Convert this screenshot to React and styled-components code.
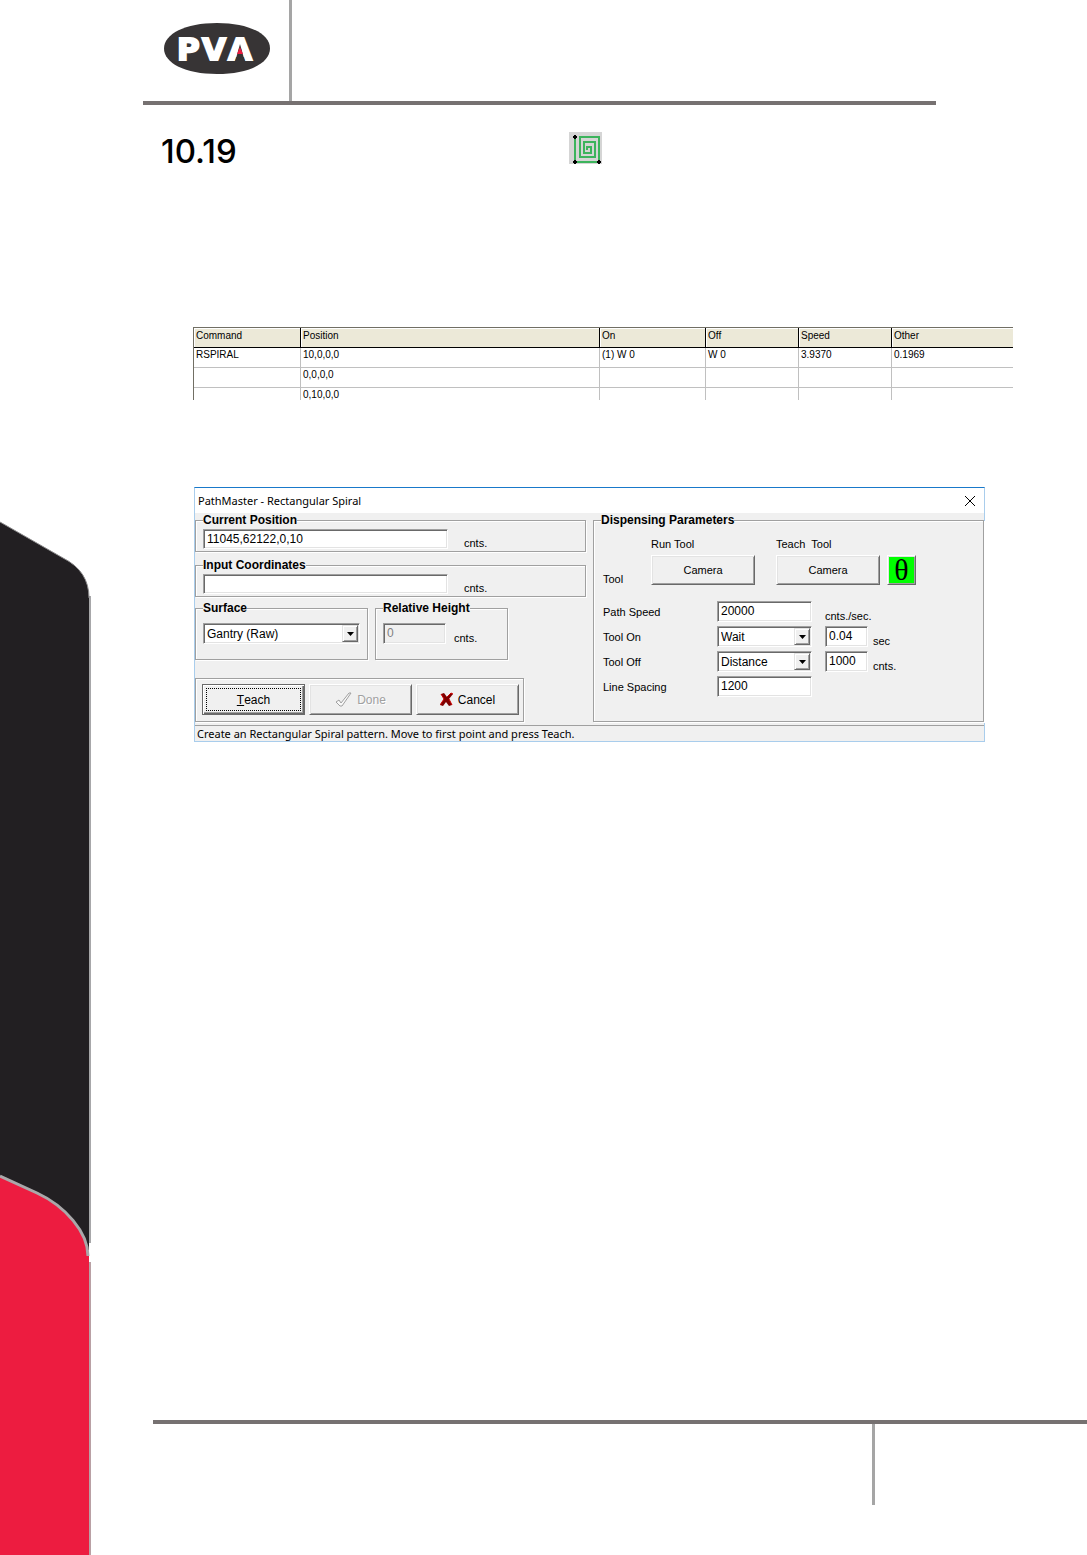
import React from 'react';
import styled, { createGlobalStyle, css } from 'styled-components';

const GlobalStyle = createGlobalStyle`
  * {
    box-sizing: border-box;
  }
  body {
    margin: 0;
    background: #fff;
    color: #000;
    font-family: "Liberation Sans", Arial, sans-serif;
  }
`;

const Page = styled.div`
  display: grid;
  grid-template-columns: 91px 1fr;
  min-height: 100vh;
`;
const Side = styled.aside`
  display: flex;
  align-items: flex-end;
  overflow: hidden;
`;
const Main = styled.main`
  display: flex;
  flex-direction: column;
  min-width: 0;
`;

const Header = styled.header`
  display: flex;
  height: 105px;
  margin: 0 151px 0 52px;
  border-bottom: 4px solid #767171;
`;
const LogoCell = styled.div`
  width: 149px;
  padding: 23px 0 0 21px;
  border-right: 3px solid #a5a5a5;
`;
const TitleRow = styled.div`
  display: flex;
  align-items: center;
  height: 32px;
  margin: 27px 0 0 70px;
`;
const SectionNumber = styled.h1`
  width: 408px;
  margin: 0;
  padding-top: 6px;
  font: 500 33px/32px Inter, sans-serif;
`;

const CommandTable = styled.table`
  table-layout: fixed;
  width: calc(100% - 176px);
  margin: 163px 74px 0 102px;
  border-collapse: separate;
  border-spacing: 0;
  border-top: 1px solid #716f64;
  border-left: 1px solid #716f64;
  font-size: 10px;
  line-height: 11px;
  text-align: left;
`;
const Col = styled.col`
  width: ${(p) => p.$width};
`;
const HeadCell = styled.th`
  height: 20px;
  padding: 2px 2px 0;
  vertical-align: top;
  font-weight: 400;
  background: #ece9d8;
  border-right: 1px solid #000;
  border-bottom: 1px solid #000;
  box-shadow: inset 1px 1px 0 #fff;
  &:last-child {
    border-right: 0;
  }
`;
const Cell = styled.td`
  height: 20px;
  padding: 1px 2px 0;
  vertical-align: top;
  border-right: 1px solid #c0c0c0;
  border-bottom: 1px solid #c0c0c0;
  &:last-child {
    border-right: 0;
  }
  tr:last-child > & {
    height: 12px;
    border-bottom: 0;
  }
`;

const sunken = css`
  border: 1px solid;
  border-color: #a0a0a0 #fff #fff #a0a0a0;
  box-shadow: inset 1px 1px 0 #696969, inset -1px -1px 0 #e3e3e3;
`;
const etched = css`
  border: 1px solid #a0a0a0;
  box-shadow: 1px 1px 0 #fff, inset 1px 1px 0 #fff;
`;

const Dialog = styled.section`
  margin: 87px 102px 0 103px;
  background: #f0f0f0;
  border: 1px solid #a9cdec;
  border-top-color: #1979ca;
`;
const TitleBar = styled.div`
  display: flex;
  align-items: center;
  justify-content: space-between;
  height: 25px;
  padding: 0 8px 0 3px;
  background: #fff;
`;
const DialogTitle = styled.h2`
  margin: 0;
  font: 400 11px/16px "Noto Sans", sans-serif;
`;
const CloseButton = styled.button`
  display: flex;
  padding: 0;
  border: 0;
  background: none;
`;
const DialogBody = styled.div`
  display: grid;
  grid-template-columns: 1fr 1fr;
  column-gap: 7px;
`;
const LeftColumn = styled.div`
  display: flex;
  flex-direction: column;
`;
const Group = styled.fieldset`
  ${etched}
  min-width: 0;
  width: ${(p) => p.$width || 'auto'};
  margin: ${(p) => p.$margin || 0};
  padding: ${(p) => p.$padding || '2px 7px'};
`;
const GroupTitle = styled.legend`
  padding: 0;
  background: #f0f0f0;
  font-size: 12px;
  font-weight: 700;
  line-height: 14px;
`;
const FieldRow = styled.div`
  display: flex;
  align-items: flex-end;
  gap: ${(p) => p.$gap || '16px'};
`;
const GroupRow = styled.div`
  display: flex;
  gap: 7px;
  margin-top: 4px;
`;
const TextInput = styled.input`
  ${sunken}
  width: ${(p) => p.$width || '100%'};
  height: ${(p) => p.$height || '21px'};
  padding: 0 3px 1px;
  border-radius: 0;
  background: #fff;
  color: #000;
  font: 12px/16px "Liberation Sans", Arial, sans-serif;
  &:disabled {
    background: #f0f0f0;
    color: #808080;
  }
`;
const Unit = styled.span`
  font-size: 11px;
  line-height: 12px;
`;

const ComboBox = styled.div`
  ${sunken}
  position: relative;
  width: ${(p) => p.$width || '100%'};
  height: 21px;
  background: #fff;
`;
const ComboSelect = styled.select`
  appearance: none;
  display: block;
  width: 100%;
  height: 100%;
  padding: 0 18px 0 3px;
  border: 0;
  background: transparent;
  color: #000;
  font: 12px/16px "Liberation Sans", Arial, sans-serif;
`;
const ComboArrow = styled.span`
  position: absolute;
  top: 1px;
  right: 1px;
  bottom: 1px;
  display: flex;
  align-items: center;
  justify-content: center;
  width: 16px;
  background: #f0f0f0;
  border: 1px solid;
  border-color: #e3e3e3 #696969 #696969 #e3e3e3;
  box-shadow: inset 1px 1px 0 #fff, inset -1px -1px 0 #a0a0a0;
  pointer-events: none;
`;

const PushButton = styled.button`
  display: flex;
  align-items: center;
  justify-content: center;
  gap: 5px;
  width: ${(p) => p.$width || '100%'};
  height: ${(p) => p.$height || '31px'};
  padding: 0;
  border: 1px solid;
  border-color: #fff #696969 #696969 #fff;
  border-radius: 0;
  background: #f0f0f0;
  box-shadow: inset 1px 1px 0 #e3e3e3, inset -1px -1px 0 #a0a0a0;
  color: #000;
  font: ${(p) => p.$size || '12px'}/14px "Liberation Sans", Arial, sans-serif;
  &:disabled {
    color: #a0a0a0;
    text-shadow: 1px 1px 0 #fff;
  }
`;
const DefaultButton = styled(PushButton)`
  padding: 3px;
  border-color: #696969;
  box-shadow: inset 1px 1px 0 #fff, inset -1px -1px 0 #696969, inset -2px -2px 0 #a0a0a0;
`;
const FocusRing = styled.span`
  display: flex;
  align-items: center;
  justify-content: center;
  width: 100%;
  height: 100%;
  border: 1px dotted #000;
`;
const ButtonPanel = styled.div`
  ${etched}
  display: flex;
  gap: 4px;
  width: 329px;
  margin-top: 18px;
  padding: 5px 0 6px 6px;
`;

const ToolGrid = styled.div`
  display: grid;
  grid-template-columns: 48px 104px 21px 104px 7px 29px;
  align-items: end;
  margin-left: 2px;
`;
const ToolHeading = styled.label`
  grid-row: 1;
  grid-column: ${(p) => p.$column};
  padding-bottom: 4px;
  font-size: 11px;
  line-height: 14px;
  white-space: pre;
`;
const ToolSlot = styled.div`
  grid-row: 2;
  grid-column: ${(p) => p.$column};
`;
const ToolLabel = styled.span`
  grid-row: 2;
  grid-column: 1;
  font-size: 11px;
  line-height: 12px;
`;
const Theta = styled.span`
  display: flex;
  align-items: center;
  justify-content: center;
  width: 25px;
  height: 26px;
  background: #0f0;
  font: 30px/26px "Liberation Serif", serif;
`;
const ParameterGrid = styled.div`
  display: grid;
  grid-template-columns: 114px 95px 1fr;
  row-gap: 4px;
  align-items: center;
  margin: 16px 0 0 2px;
`;
const ParameterLabel = styled.label`
  font-size: 11px;
  line-height: 14px;
`;
const ParameterExtra = styled.div`
  display: flex;
  align-items: flex-end;
  gap: 5px;
  height: 21px;
  padding-left: 13px;
`;
const StatusBar = styled.div`
  margin-top: 3px;
  padding-left: 2px;
  border-top: 1px solid #a0a0a0;
  font: 11px/15px "Noto Sans", sans-serif;
`;

const Footer = styled.footer`
  display: grid;
  grid-template-columns: 1fr 215px;
  margin: auto 0 50px 62px;
  border-top: 4px solid #767171;
`;
const FooterCell = styled.div`
  grid-column: 2;
  height: 81px;
  border-left: 3px solid #a5a5a5;
`;

const columns = [
  ['Command', '107px'],
  ['Position', '299px'],
  ['On', '106px'],
  ['Off', '93px'],
  ['Speed', '93px'],
  ['Other', 'auto'],
];
const rows = [
  ['RSPIRAL', '10,0,0,0', '(1) W 0', 'W 0', '3.9370', '0.1969'],
  ['', '0,0,0,0', '', '', '', ''],
  ['', '0,10,0,0', '', '', '', ''],
];

const SideArt = () => (
  <svg width="91" height="1035" viewBox="0 0 91 1035" aria-hidden="true">
    <path d="M90 76V723" stroke="#a7a7a9" strokeWidth="2" />
    <path d="M90 742V1035" stroke="#b9a0a4" strokeWidth="2" />
    <path d="M0 2L63 38Q89 51 89 78V730H0Z" fill="#221f22" />
    <path d="M0 2L63 38Q89 51 89 78" fill="none" stroke="#8b898b" />
    <path d="M0 656L37 673C65 686 88 712 89 736V1035H0Z" fill="#ed1c40" />
    <path d="M0 656L37 673C65 686 88 712 88 736" fill="none" stroke="#aaa8aa" strokeWidth="3" />
  </svg>
);

const Logo = () => (
  <svg width="106" height="51" viewBox="0 0 106 51">
    <path d="M53 0C85 0 106 11 106 25.500S85 51 53 51 0 40 0 25.500 21 0 53 0Z" fill="#373435" />
    <text x="13 38 64" y="37" fill="#fff" stroke="#fff" strokeWidth="2" fontFamily="DejaVu Sans" fontWeight="700" fontSize="31">
      PVA
    </text>
    <path d="M76 21L81 39H71Z" fill="#373435" />
    <path d="M76 24L79 31H73Z" fill="#ed1c40" />
  </svg>
);

const SpiralIcon = () => (
  <svg width="33" height="32" viewBox="0 0 33 32" aria-hidden="true">
    <path d="M0 0H33V32H0Z" fill="#d5d5d5" />
    <path
      d="M6 5V30H30V5H11V25H26V10H15V21H22V15H18V18"
      fill="none"
      stroke="#3cb45c"
      strokeWidth="2"
    />
    <path d="M4 5H8M6 3V7M4 30H8M6 28V32M28 30H32M30 28V32" stroke="#000" strokeWidth="2" />
  </svg>
);

const Combo = ({ id, value, width, labelledBy }) => (
  <ComboBox $width={width}>
    <ComboSelect id={id} defaultValue={value} aria-labelledby={labelledBy}>
      <option>{value}</option>
    </ComboSelect>
    <ComboArrow>
      <svg width="7" height="4" viewBox="0 0 7 4" aria-hidden="true">
        <path d="M0 0H7L3.500 4Z" />
      </svg>
    </ComboArrow>
  </ComboBox>
);

const CheckIcon = () => (
  <svg width="17" height="16" viewBox="0 0 17 16" aria-hidden="true">
    <path d="M1 10L4 8L6 11L14 1H16L7 14H5Z" fill="#f8f8f8" stroke="#a0a0a0" />
  </svg>
);

const CrossIcon = () => (
  <svg width="13" height="15" viewBox="0 0 13 15" aria-hidden="true">
    <path d="M1 2L4 1L7 5L11 1L13 2L9 7L12 13L9 14L6 10L3 14L0 13L4 7Z" fill="#800000" />
    <path d="M1 2L4 7L0 13M7 5L11 1L13 2M9 7L12 13" fill="none" stroke="#d00000" />
  </svg>
);

const LeftPane = () => (
  <LeftColumn>
    <Group>
      <GroupTitle id="current">Current Position</GroupTitle>
      <FieldRow>
        <TextInput $width="245px" $height="20px" defaultValue="11045,62122,0,10" aria-labelledby="current" />
        <Unit>cnts.</Unit>
      </FieldRow>
    </Group>
    <Group $margin="6px 0 0">
      <GroupTitle id="coordinates">Input Coordinates</GroupTitle>
      <FieldRow>
        <TextInput $width="245px" $height="20px" aria-labelledby="coordinates" />
        <Unit>cnts.</Unit>
      </FieldRow>
    </Group>
    <GroupRow>
      <Group $width="173px" $padding="8px 7px 15px">
        <GroupTitle id="surface">Surface</GroupTitle>
        <Combo value="Gantry (Raw)" width="157px" labelledBy="surface" />
      </Group>
      <Group $width="133px" $padding="8px 7px 15px">
        <GroupTitle id="height">Relative Height</GroupTitle>
        <FieldRow $gap="8px">
          <TextInput $width="63px" defaultValue="0" disabled aria-labelledby="height" />
          <Unit>cnts.</Unit>
        </FieldRow>
      </Group>
    </GroupRow>
    <ButtonPanel>
      <DefaultButton $width="103px">
        <FocusRing>
          <u>T</u>each
        </FocusRing>
      </DefaultButton>
      <PushButton $width="103px" disabled>
        <CheckIcon />
        Done
      </PushButton>
      <PushButton $width="103px">
        <CrossIcon />
        Cancel
      </PushButton>
    </ButtonPanel>
  </LeftColumn>
);

const DispensingPane = () => (
  <Group $padding="10px 7px 24px">
    <GroupTitle>Dispensing Parameters</GroupTitle>
    <ToolGrid>
      <ToolHeading htmlFor="run-tool" $column={2}>Run Tool</ToolHeading>
      <ToolHeading htmlFor="teach-tool" $column={4}>{'Teach  Tool'}</ToolHeading>
      <ToolLabel>Tool</ToolLabel>
      <ToolSlot $column={2}>
        <PushButton id="run-tool" $size="11px" $height="30px">Camera</PushButton>
      </ToolSlot>
      <ToolSlot $column={4}>
        <PushButton id="teach-tool" $size="11px" $height="30px">Camera</PushButton>
      </ToolSlot>
      <ToolSlot $column={6}>
        <PushButton $height="30px">
          <Theta>θ</Theta>
        </PushButton>
      </ToolSlot>
    </ToolGrid>
    <ParameterGrid>
      <ParameterLabel htmlFor="speed">Path Speed</ParameterLabel>
      <TextInput id="speed" defaultValue="20000" />
      <ParameterExtra>
        <Unit>cnts./sec.</Unit>
      </ParameterExtra>
      <ParameterLabel id="on-label" htmlFor="tool-on">Tool On</ParameterLabel>
      <Combo id="tool-on" value="Wait" />
      <ParameterExtra>
        <TextInput $width="43px" defaultValue="0.04" aria-labelledby="on-label" />
        <Unit>sec</Unit>
      </ParameterExtra>
      <ParameterLabel id="off-label" htmlFor="tool-off">Tool Off</ParameterLabel>
      <Combo id="tool-off" value="Distance" />
      <ParameterExtra>
        <TextInput $width="43px" defaultValue="1000" aria-labelledby="off-label" />
        <Unit>cnts.</Unit>
      </ParameterExtra>
      <ParameterLabel htmlFor="spacing">Line Spacing</ParameterLabel>
      <TextInput id="spacing" defaultValue="1200" />
    </ParameterGrid>
  </Group>
);

export default function App() {
  return (
    <Page>
      <GlobalStyle />
      <Side>
        <SideArt />
      </Side>
      <Main>
        <Header>
          <LogoCell>
            <Logo />
          </LogoCell>
        </Header>
        <TitleRow>
          <SectionNumber>10.19</SectionNumber>
          <SpiralIcon />
        </TitleRow>
        <CommandTable>
          <colgroup>
            {columns.map(([name, width]) => (
              <Col key={name} $width={width} />
            ))}
          </colgroup>
          <thead>
            <tr>
              {columns.map(([name]) => (
                <HeadCell key={name}>{name}</HeadCell>
              ))}
            </tr>
          </thead>
          <tbody>
            {rows.map((row) => (
              <tr key={row[1]}>
                {row.map((text, i) => (
                  <Cell key={i}>{text}</Cell>
                ))}
              </tr>
            ))}
          </tbody>
        </CommandTable>
        <Dialog>
          <TitleBar>
            <DialogTitle>PathMaster - Rectangular Spiral</DialogTitle>
            <CloseButton aria-label="Close">
              <svg width="12" height="12" viewBox="0 0 12 12" aria-hidden="true">
                <path d="M1 1L11 11M11 1L1 11" stroke="#000" />
              </svg>
            </CloseButton>
          </TitleBar>
          <DialogBody>
            <LeftPane />
            <DispensingPane />
          </DialogBody>
          <StatusBar>Create an Rectangular Spiral pattern. Move to first point and press Teach.</StatusBar>
        </Dialog>
        <Footer>
          <FooterCell />
        </Footer>
      </Main>
    </Page>
  );
}
